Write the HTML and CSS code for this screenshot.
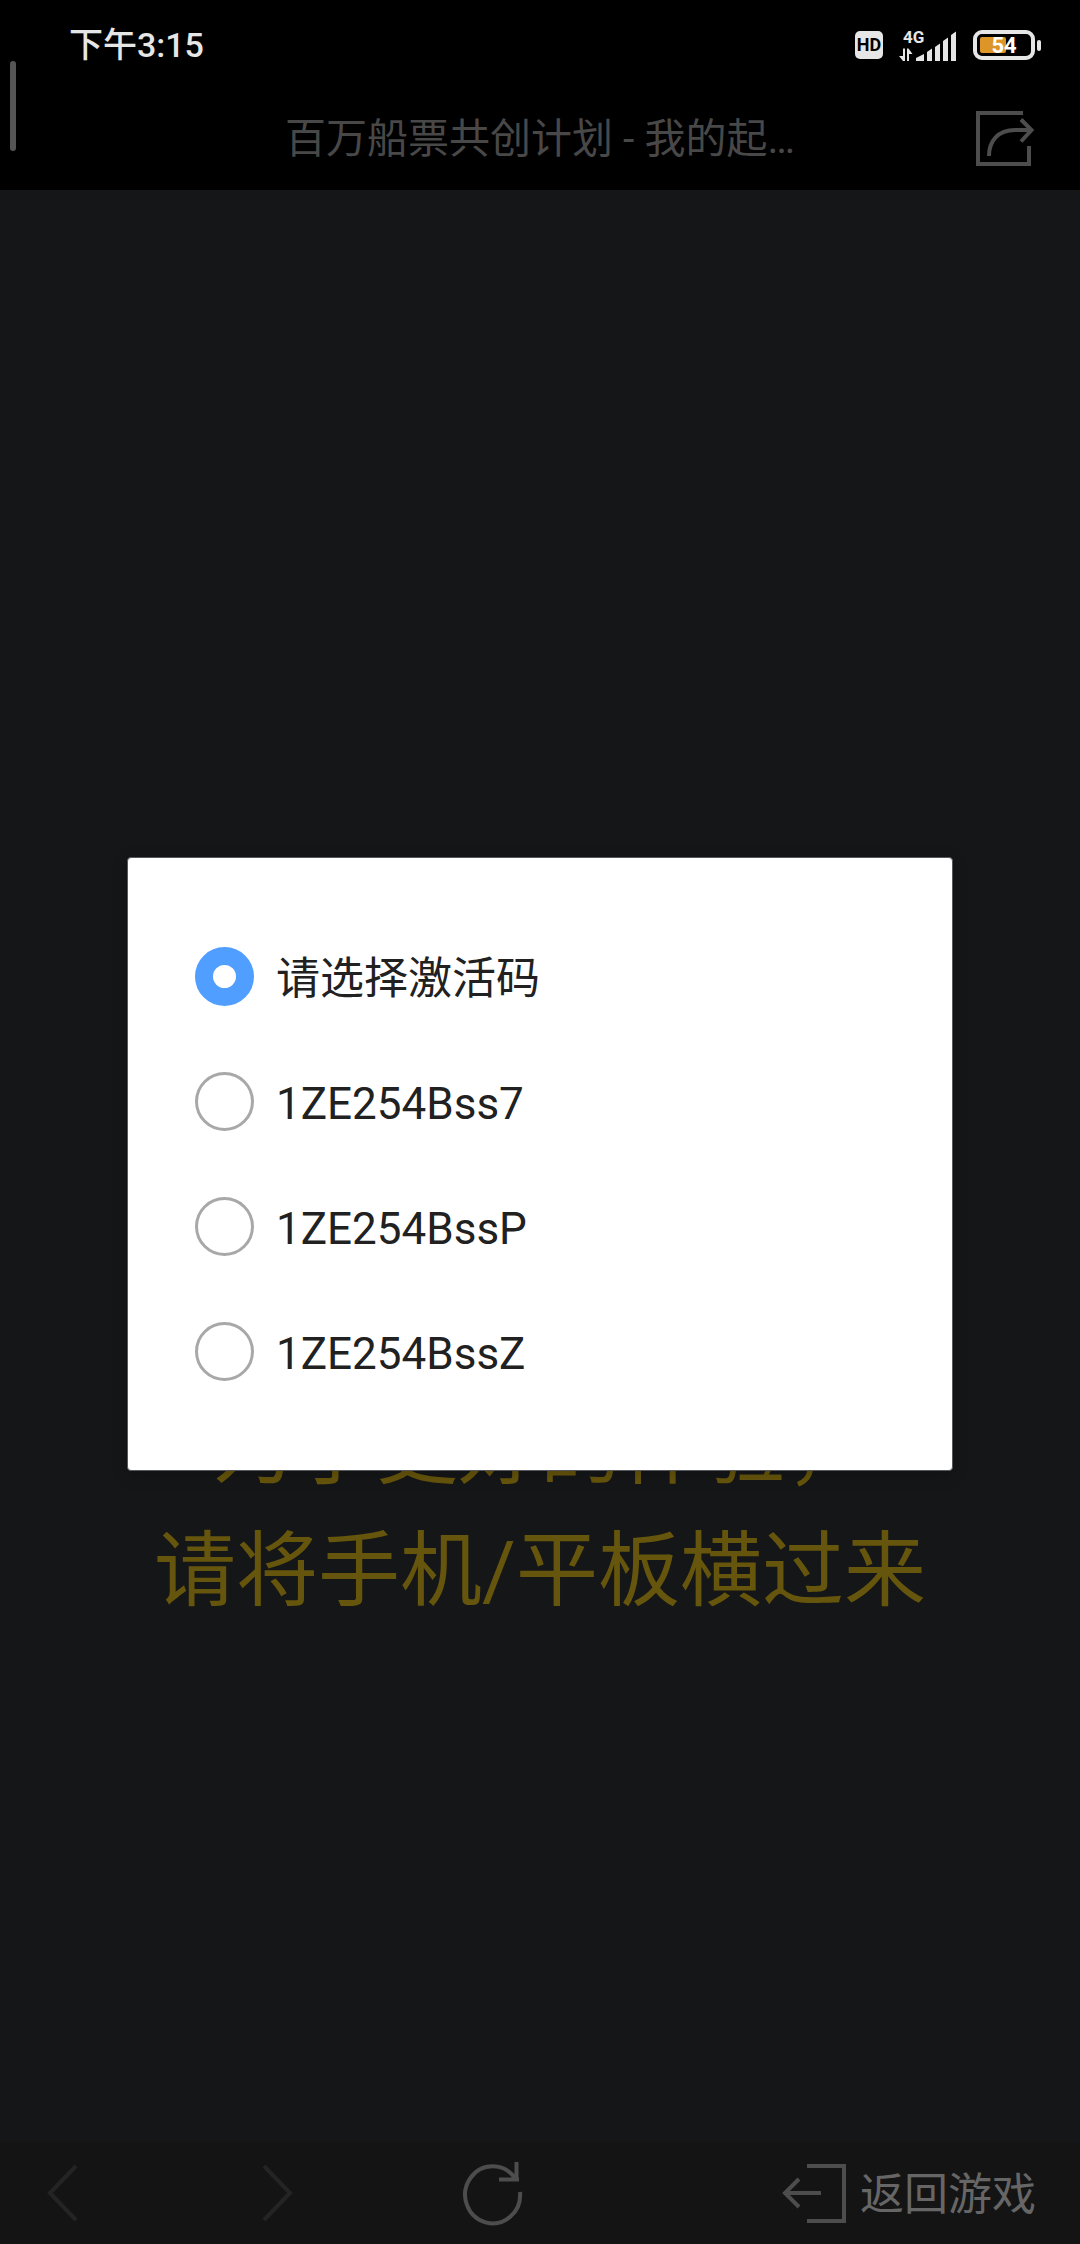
FILE: index.html
```html
<!DOCTYPE html>
<html lang="zh-CN">
<head>
<meta charset="utf-8">
<meta name="viewport" content="width=device-width, initial-scale=1">
<title>百万船票共创计划</title>
<link rel="stylesheet" href="styles.css">
</head>
<body>
<div class="screen">
  <div class="status-bar">
    <time class="clock">下午3:15</time>
    <div class="status-icons">
      <span class="hd">HD</span>
      <svg class="signal" width="58" height="34" viewBox="0 0 58 34" role="img" aria-label="4G">
        <text class="signal-type" x="4" y="15">4G</text>
        <path d="M0 28l4 5h2V20.500H4V28zM8 33V20.500h1.500l4 5.500H10V33z"/>
        <path d="M17 33v-3l8-4v7zM28 33V24l5-3.500V33zM36 33V19l5-3.500V33zM44 33V13l5-3.500V33zM52 33V7l5-3.500V33z"/>
      </svg>
      <svg class="battery" width="68" height="30" viewBox="0 0 68 30" role="img" aria-label="54%">
        <rect class="battery-fill" x="7" y="7" width="26" height="16" rx="2"/>
        <rect class="battery-case" x="2" y="2" width="58" height="26" rx="7"/>
        <rect class="battery-tip" x="64" y="10" width="4" height="11" rx="2"/>
        <text class="battery-level" x="31" y="23">54</text>
      </svg>
    </div>
  </div>

  <header class="title-bar">
    <h1 class="title">百万船票共创计划 - 我的起…</h1>
    <button class="share" type="button" aria-label="分享">
      <svg width="60" height="58" viewBox="0 0 60 58">
        <path d="M48 3H3v51h51V36"/>
        <path d="M14 46C14 31 23 20 40 20h16"/>
        <path d="M46 9.500L56.500 20 46 31.500"/>
      </svg>
    </button>
  </header>

  <main class="page">
    <p class="notice">为了更好的体验，<br>请将手机/平板横过来</p>
  </main>

  <nav class="tool-bar">
    <div class="history">
      <button class="tool faint" type="button" aria-label="后退">
        <svg width="32" height="58" viewBox="0 0 32 58"><path d="M29 2L3 29l26 27"/></svg>
      </button>
      <button class="tool faint" type="button" aria-label="前进">
        <svg width="32" height="58" viewBox="0 0 32 58"><path d="M2 2l26 27L2 56"/></svg>
      </button>
      <button class="tool" type="button" aria-label="刷新">
        <svg width="62" height="62" viewBox="0 0 62 62"><path d="M58 30A27.500 28.500 0 1 1 53.500 17M54.500 0v18.500M37 17.500h20"/></svg>
      </button>
    </div>
    <button class="back-to-game" type="button">
      <svg width="64" height="60" viewBox="0 0 64 60"><path d="M25 3h37v55H25M39 30H3M17 16L3 30l14 14"/></svg>
      <span>返回游戏</span>
    </button>
  </nav>

  <div class="overlay">
    <form class="dialog" role="dialog" aria-label="请选择激活码">
      <label class="option"><input class="radio" type="radio" name="code" checked><span class="option-text">请选择激活码</span></label>
      <label class="option"><input class="radio" type="radio" name="code"><span class="option-text">1ZE254Bss7</span></label>
      <label class="option"><input class="radio" type="radio" name="code"><span class="option-text">1ZE254BssP</span></label>
      <label class="option"><input class="radio" type="radio" name="code"><span class="option-text">1ZE254BssZ</span></label>
    </form>
  </div>
  <div class="edge-handle"></div>
</div>
</body>
</html>
```

FILE: styles.css
```css
* {
  box-sizing: border-box;
}

body {
  margin: 0;
  background: #000;
  font-family: Roboto, "Noto Sans CJK SC", sans-serif;
}

button {
  border: 0;
  padding: 0;
  background: none;
  color: inherit;
  font: inherit;
}

svg {
  display: block;
  overflow: visible;
}

.screen {
  position: relative;
  display: flex;
  flex-direction: column;
  min-height: 100vh;
}

/* System status bar */
.status-bar {
  display: flex;
  align-items: center;
  justify-content: space-between;
  height: 83px;
  padding: 7px 39px 0 69px;
  color: #e6e6e6;
}

.clock {
  font-size: 34px;
  font-weight: 500;
  line-height: 48px;
}

.status-icons {
  display: flex;
  align-items: center;
  gap: 16px;
}

.hd {
  width: 28px;
  border-radius: 5px;
  background: #e6e6e6;
  color: #000;
  font-size: 18px;
  font-weight: 700;
  line-height: 28px;
  text-align: center;
}

.signal {
  fill: #e6e6e6;
}

.signal-type {
  font-size: 17px;
  font-weight: 700;
}

.battery-case {
  fill: none;
  stroke: #e6e6e6;
  stroke-width: 4;
}

.battery-fill {
  fill: #dc9526;
}

.battery-tip {
  fill: #e6e6e6;
}

.battery-level {
  fill: #fff;
  font-size: 22px;
  font-weight: 700;
  text-anchor: middle;
}

/* Browser title bar */
.title-bar {
  display: grid;
  grid-template-columns: 1fr auto 1fr;
  align-items: center;
  height: 107px;
  padding: 4px 45px 0;
  color: #484848;
}

.title {
  grid-column: 2;
  margin: 0;
  font-size: 41px;
  font-weight: 400;
  line-height: 60px;
}

.share {
  justify-self: end;
}

.share svg {
  fill: none;
  stroke: #4d4d4d;
  stroke-width: 4;
}

/* Page content */
.page {
  flex: 1;
  display: flex;
  flex-direction: column;
  justify-content: flex-end;
  padding-bottom: 510px;
  background: #151618;
}

.notice {
  margin: 0;
  color: #66550c;
  font-size: 82px;
  line-height: 122px;
  text-align: center;
}

/* Bottom tool bar */
.tool-bar {
  display: flex;
  justify-content: space-between;
  height: 102px;
  padding-right: 44px;
  background: #141414;
  color: #666;
}

.tool-bar svg {
  fill: none;
  stroke: #4d4d4d;
  stroke-width: 4;
}

.history {
  display: flex;
  gap: 90px;
}

.tool {
  display: grid;
  place-items: center;
  width: 125px;
}

.tool.faint svg {
  stroke: #242424;
}

.back-to-game {
  display: flex;
  align-items: center;
  gap: 14px;
  font-size: 44px;
  line-height: 60px;
}

.back-to-game span {
  padding-top: 4px;
}

/* Code picker */
.overlay {
  position: absolute;
  inset: 83px 0 0;
  display: flex;
  align-items: center;
  padding: 0 127px;
}

.dialog {
  flex: 1;
  padding: 56px 67px;
  border: 1px solid #55585c;
  border-radius: 4px;
  background: #fff;
  box-shadow: 0 4px 16px rgba(0, 0, 0, 0.2);
}

.option {
  display: flex;
  align-items: center;
  gap: 22px;
  height: 125px;
  color: #212121;
  font-size: 44px;
  line-height: 60px;
}

.option-text {
  padding-top: 6px;
}

.radio {
  appearance: none;
  width: 59px;
  height: 59px;
  margin: 0;
  border: 3px solid #a8a8a8;
  border-radius: 50%;
}

.radio:checked {
  border: 18px solid #509eff;
}

/* Side panel handle */
.edge-handle {
  position: absolute;
  top: 61px;
  left: 10px;
  width: 6px;
  height: 90px;
  border-radius: 3px;
  background: #555;
}
```
